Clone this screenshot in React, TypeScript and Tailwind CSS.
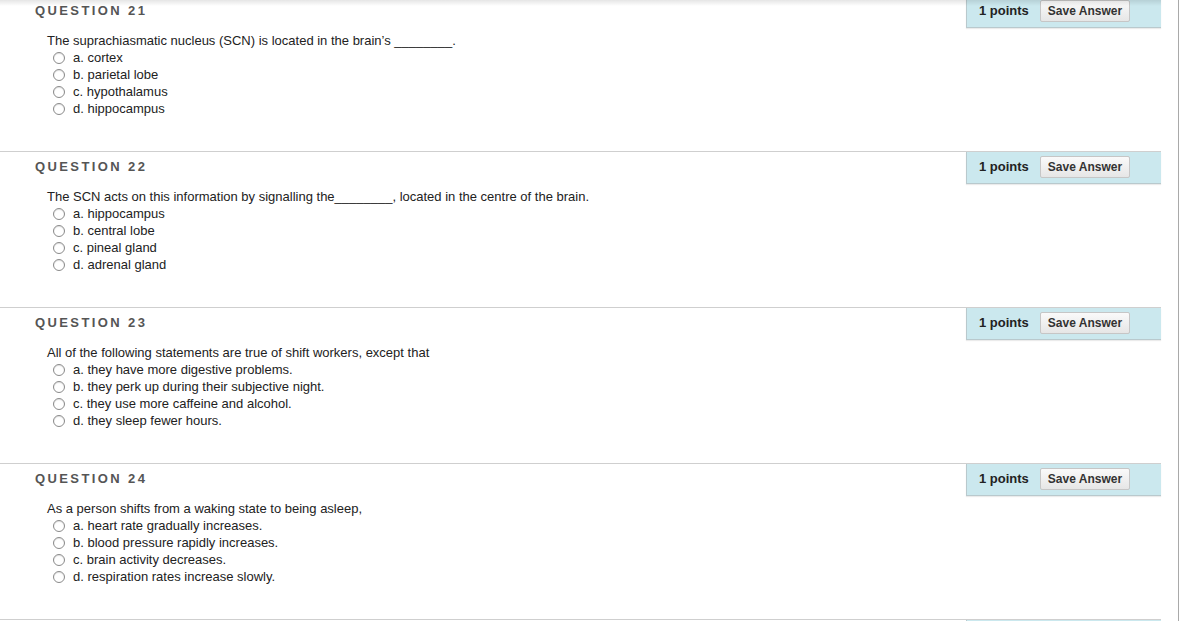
import React from 'react';

type Question = {
  number: number;
  text: React.ReactNode;
  options: string[];
};

const questions: Question[] = [
  {
    number: 21,
    text: <>The suprachiasmatic nucleus (SCN) is located in the brain’s ________.</>,
    options: ['a. cortex', 'b. parietal lobe', 'c. hypothalamus', 'd. hippocampus'],
  },
  {
    number: 22,
    text: <>The SCN acts on this information by signalling the________, located in the centre of the brain.</>,
    options: ['a. hippocampus', 'b. central lobe', 'c. pineal gland', 'd. adrenal gland'],
  },
  {
    number: 23,
    text: <>All of the following statements are true of shift workers, except that</>,
    options: [
      'a. they have more digestive problems.',
      'b. they perk up during their subjective night.',
      'c. they use more caffeine and alcohol.',
      'd. they sleep fewer hours.',
    ],
  },
  {
    number: 24,
    text: <>As a person shifts from a waking state to being asleep,</>,
    options: [
      'a. heart rate gradually increases.',
      'b. blood pressure rapidly increases.',
      'c. brain activity decreases.',
      'd. respiration rates increase slowly.',
    ],
  },
];

const Radio: React.FC = () => (
  <span className="inline-block w-[12px] h-[12px] rounded-full border border-[#8a8a8a] bg-white shadow-[inset_0_1px_1px_rgba(0,0,0,0.12)] shrink-0" />
);

const QuestionBlock: React.FC<{ q: Question }> = ({ q }) => (
  <div className="h-[156px] border-t border-[#cfcfcf]">
    <div className="flex justify-between h-[32px]">
      <h3 className="pl-[35px] pt-[6px] text-[13px] font-bold tracking-[2.4px] text-[#555] leading-[17px]">
        QUESTION {q.number}
      </h3>
      <div className="w-[195px] h-[32px] bg-[#cbe8ee] border-l border-b border-[#b9c9cd] shadow-[0_1px_1px_rgba(0,0,0,0.08)] flex items-center pl-[12px] pb-[2px] gap-[11px]">
        <span className="text-[13px] font-bold text-[#222]">1 points</span>
        <button
          type="button"
          className="h-[22px] px-[7px] text-[12px] font-bold text-[#333] bg-gradient-to-b from-[#fafafa] to-[#e6e6e6] border border-[#c6c6c6] rounded-[2px]"
        >
          Save Answer
        </button>
      </div>
    </div>
    <div className="pl-[47px] pt-[4px] text-[13px] leading-[17px] text-[#222]">
      <p>{q.text}</p>
      <ul className="pl-[6px]">
        {q.options.map((opt) => (
          <li key={opt} className="flex items-center gap-[8px] h-[17px]">
            <Radio />
            <span>{opt}</span>
          </li>
        ))}
      </ul>
    </div>
  </div>
);

const App: React.FC = () => {
  return (
    <div
      className="relative w-[1180px] h-[621px] overflow-hidden bg-white"
      style={{ fontFamily: '"Liberation Sans", Arial, Helvetica, sans-serif' }}
    >
      <div className="flex h-full">
        <div className="w-[1161px] mt-[-5px]">
          {questions.map((q) => (
            <QuestionBlock key={q.number} q={q} />
          ))}
          <div className="flex justify-end border-t border-[#cfcfcf]">
            <div className="w-[195px] h-[32px] bg-[#cbe8ee] border-l border-[#b9c9cd]" />
          </div>
        </div>
        <div className="w-[17px]" />
        <div className="w-px bg-[#a9a9a9] h-full" />
      </div>
      <div className="absolute top-0 left-0 w-[1161px] h-[6px] bg-gradient-to-b from-[rgba(0,0,0,0.10)] to-transparent pointer-events-none" />
    </div>
  );
};

export default App;
